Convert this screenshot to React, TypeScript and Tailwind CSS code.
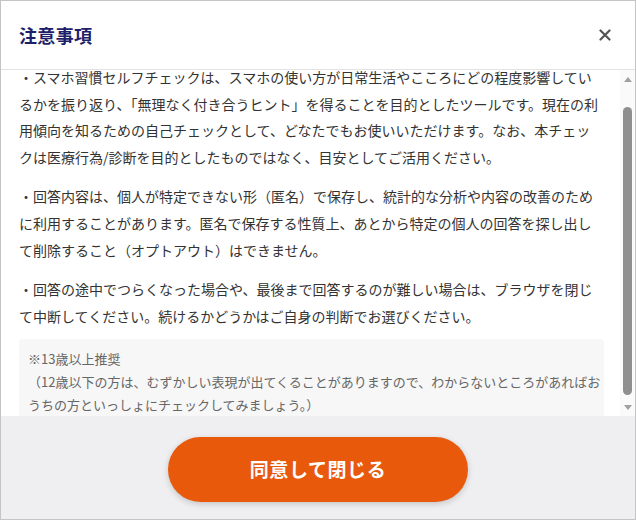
import { useEffect, useRef } from "react";

const paragraphs = [
  [
    "・スマホ習慣セルフチェックは、スマホの使い方が日常生活やこころにどの程度影響してい",
    "るかを振り返り、「無理なく付き合うヒント」を得ることを目的としたツールです。現在の利",
    "用傾向を知るための自己チェックとして、どなたでもお使いいただけます。なお、本チェッ",
    "クは医療行為/診断を目的としたものではなく、目安としてご活用ください。",
  ],
  [
    "・回答内容は、個人が特定できない形（匿名）で保存し、統計的な分析や内容の改善のため",
    "に利用することがあります。匿名で保存する性質上、あとから特定の個人の回答を探し出し",
    "て削除すること（オプトアウト）はできません。",
  ],
  [
    "・回答の途中でつらくなった場合や、最後まで回答するのが難しい場合は、ブラウザを閉じ",
    "て中断してください。続けるかどうかはご自身の判断でお選びください。",
  ],
];

const noteLines = [
  "※13歳以上推奨",
  "（12歳以下の方は、むずかしい表現が出てくることがありますので、わからないところがあればお",
  "うちの方といっしょにチェックしてみましょう。）",
];

const CloseIcon = () => (
  <svg width="12" height="12" viewBox="0 0 12 12" fill="none">
    <path d="M1.5 1.5L10.5 10.5M10.5 1.5L1.5 10.5" stroke="#555" strokeWidth="2.2" strokeLinecap="round" />
  </svg>
);

const Scrollbar = () => (
  <div className="w-[15px] shrink-0 bg-[#fafafa] flex flex-col items-center">
    <div className="h-[18px] w-full flex items-center justify-center">
      <svg width="8" height="5" viewBox="0 0 8 5">
        <path d="M4 0L8 5H0Z" fill="#a0a0a0" />
      </svg>
    </div>
    <div className="mt-[19px] w-[9px] h-[288px] rounded-full bg-[#8f8f8f]" />
    <div className="flex-1" />
    <div className="h-[18px] w-full flex items-center justify-center">
      <svg width="8" height="5" viewBox="0 0 8 5">
        <path d="M0 0H8L4 5Z" fill="#a0a0a0" />
      </svg>
    </div>
  </div>
);

const App = () => {
  const bodyRef = useRef<HTMLDivElement>(null);

  useEffect(() => {
    if (bodyRef.current) bodyRef.current.scrollTop = 26;
  }, []);

  return (
    <div
      className="w-[636px] h-[520px] flex flex-col border border-[#c4c4c4] bg-white overflow-hidden"
      style={{ fontFamily: '"Noto Sans CJK JP", "Noto Sans", sans-serif' }}
    >
      <header className="h-[69px] shrink-0 flex items-center justify-between pl-[18px] pr-[18px] border-b border-[#e3e3e3]">
        <h1 className="text-[18px] font-bold text-[#1e1f6a] tracking-[0.02em]">注意事項</h1>
        <button className="w-6 h-6 flex items-center justify-center">
          <CloseIcon />
        </button>
      </header>

      <div className="flex-1 flex min-h-0">
        <div ref={bodyRef} className="flex-1 overflow-hidden">
          <div className="pt-5 pb-5 pl-[18px] pr-[16px]">
            {paragraphs.map((lines, i) => (
              <p key={i} className="text-[14px] leading-[1.9] text-[#333] mb-[13px] last-of-type:mb-[10px]">
                {lines.map((l, j) => (
                  <span key={j} className="block whitespace-nowrap">
                    {l}
                  </span>
                ))}
              </p>
            ))}
            <div className="bg-[#f7f7f7] rounded-sm px-[9px] py-[9px] text-[13px] leading-[1.75] text-[#666]">
              {noteLines.map((l, j) => (
                <p key={j} className="whitespace-nowrap">
                  {l}
                </p>
              ))}
            </div>
          </div>
        </div>
        <Scrollbar />
      </div>

      <footer className="h-[103px] shrink-0 bg-[#efeff2] flex justify-center pt-[21px]">
        <button className="w-[300px] h-[65px] rounded-full bg-[#e8590c] text-white text-[19px] font-bold tracking-[0.03em] shadow-[0_2px_6px_rgba(0,0,0,0.18)]">
          同意して閉じる
        </button>
      </footer>
    </div>
  );
};

export default App;
